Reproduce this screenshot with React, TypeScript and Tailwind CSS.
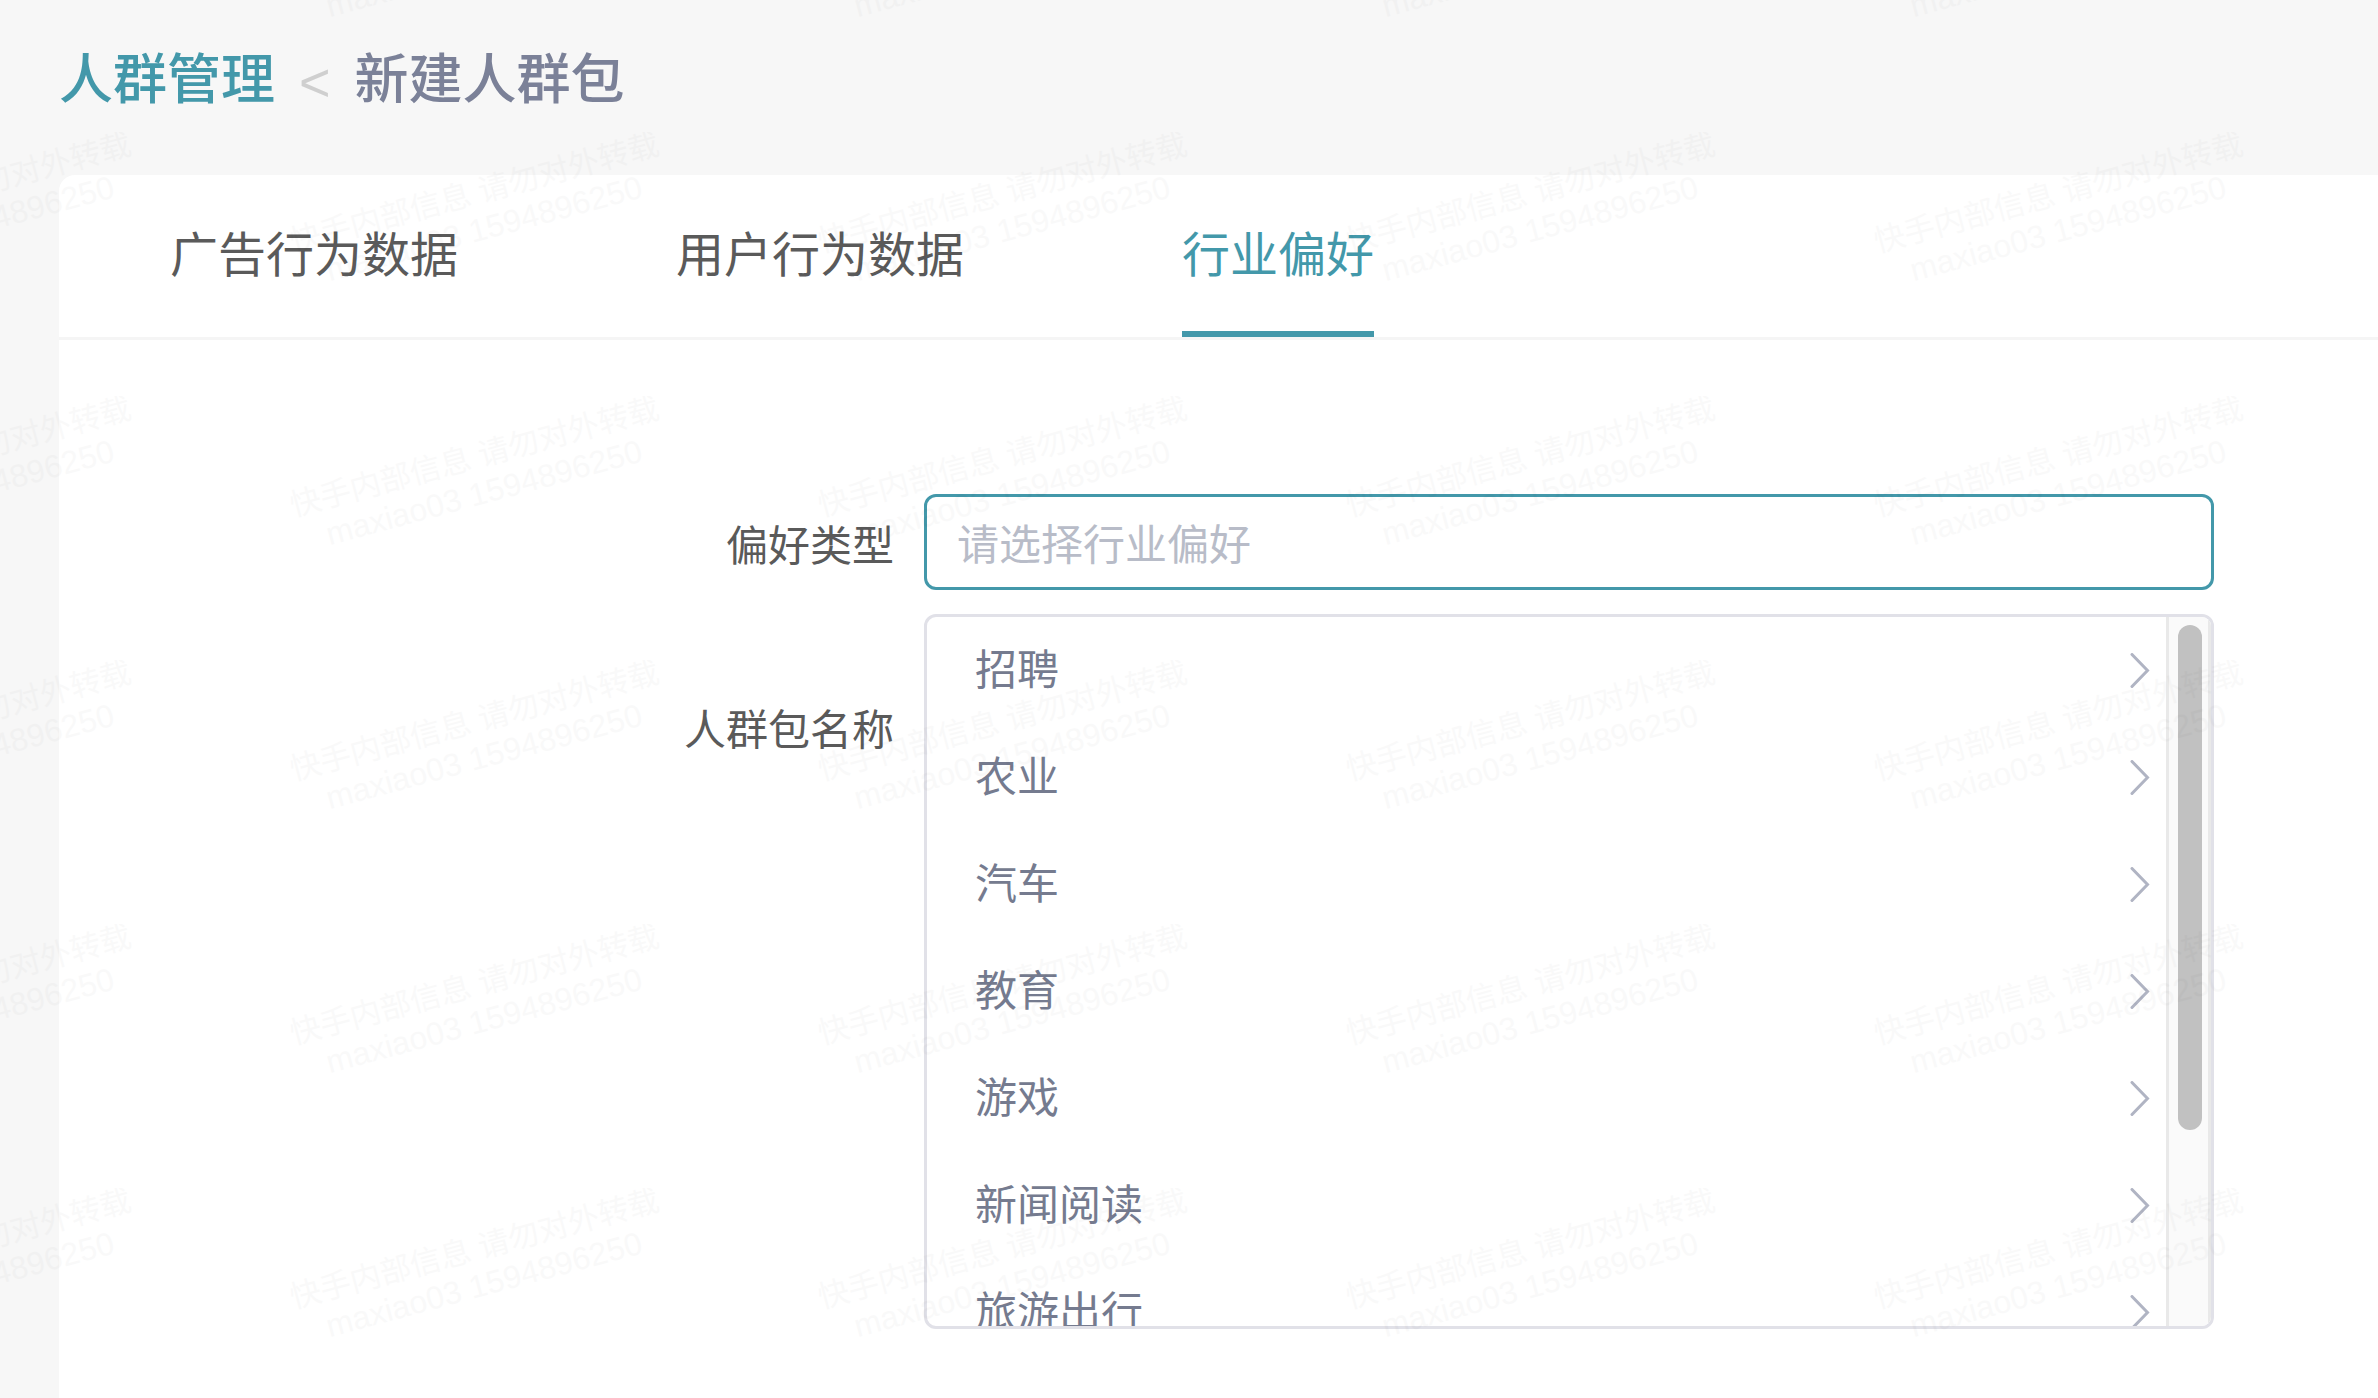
import { ChangeEvent, useState } from "react";

const TABS = ["广告行为数据", "用户行为数据", "行业偏好"];
const OPTIONS = ["招聘", "农业", "汽车", "教育", "游戏", "新闻阅读", "旅游出行"];

function Chevron() {
  return (
    <svg width="20" height="36" viewBox="0 0 20 36" fill="none" className="shrink-0" aria-hidden="true">
      <path d="M2 1.5 L17.5 17.5 L2 33.5" stroke="#b0b4c3" strokeWidth="3" strokeLinecap="round" strokeLinejoin="miter" />
    </svg>
  );
}

function Breadcrumb() {
  return (
    <nav aria-label="面包屑" className="flex items-center px-[59px] pt-10 pb-[55px] text-[54px] leading-[80px]">
      <a href="#list" className="font-medium text-[#4398aa]">人群管理</a>
      <span className="px-6 pt-1 leading-[76px] text-[#cfcfcf]" aria-hidden="true">&lt;</span>
      <span className="font-medium text-[#7b8198]">新建人群包</span>
    </nav>
  );
}

function Tabs() {
  const [active, setActive] = useState(2);
  return (
    <div role="tablist" className="flex gap-[218px] border-b-[3px] border-[#f5f5f5] pl-[111px]">
      {TABS.map((tab, i) => (
        <button
          key={tab}
          type="button"
          role="tab"
          aria-selected={i === active}
          onClick={() => setActive(i)}
          className={
            i === active
              ? "border-b-[6px] border-[#4398aa] pt-[6px] text-[48px] leading-[150px] text-[#4398aa]"
              : "border-b-[6px] border-transparent pt-[6px] text-[48px] leading-[150px] text-[#5a5a5a]"
          }
        >
          {tab}
        </button>
      ))}
    </div>
  );
}

function Dropdown({ onPick }: { onPick: (value: string) => void }) {
  return (
    <div className="absolute inset-x-0 top-full z-10 mt-6 flex h-[715px] overflow-hidden rounded-xl border-[3px] border-[#e1e1e8] bg-white">
      <ul role="listbox" aria-label="行业偏好" className="h-full flex-1 overflow-hidden">
        {OPTIONS.map((option) => (
          <li key={option} role="option" aria-selected="false">
            <button
              type="button"
              onClick={() => onPick(option)}
              className="flex h-[107px] w-full items-center justify-between pr-4 pl-12 text-[42px] text-[#757b8f]"
            >
              {option}
              <Chevron />
            </button>
          </li>
        ))}
      </ul>
      <div className="w-[45px] border-r-[3px] border-l-[3px] border-[#e9e9e9] bg-[#fafafa] pt-2 pl-[9px]">
        <div className="h-[505px] w-6 rounded-full bg-[#c1c1c1]" />
      </div>
    </div>
  );
}

function PackageForm() {
  const [kind, setKind] = useState("");
  const [name, setName] = useState("");
  return (
    <form className="flex flex-col gap-[88px] pt-[154px] pr-[164px] text-[42px]">
      <div className="flex items-center">
        <label htmlFor="kind" className="w-[865px] shrink-0 pt-2 pr-[30px] text-right text-[#5a5a5a]">
          偏好类型
        </label>
        <div className="relative min-w-0 flex-1">
          <input
            id="kind"
            value={kind}
            placeholder="请选择行业偏好"
            onChange={(e: ChangeEvent<HTMLInputElement>) => setKind(e.target.value)}
            className="block h-24 w-full rounded-xl border-[3px] border-[#4398aa] bg-white px-[30px] pt-2 text-[#757b8f] outline-none placeholder:text-[#b8bcc8]"
          />
          <Dropdown onPick={setKind} />
        </div>
      </div>
      <div className="flex items-center">
        <label htmlFor="name" className="w-[865px] shrink-0 pt-2 pr-[30px] text-right text-[#5a5a5a]">
          人群包名称
        </label>
        <input
          id="name"
          value={name}
          onChange={(e: ChangeEvent<HTMLInputElement>) => setName(e.target.value)}
          className="block h-24 min-w-0 flex-1 rounded-xl border-[3px] border-[#e1e1e8] bg-white px-[30px] text-[#757b8f] outline-none"
        />
      </div>
    </form>
  );
}

function Watermark() {
  return (
    <div className="pointer-events-none absolute inset-0 z-20 overflow-hidden opacity-[0.02] select-none" aria-hidden="true">
      <div className="-mt-[132px] -ml-[313px] grid w-[2640px] grid-cols-5 text-black">
        {Array.from({ length: 30 }, (_, i) => (
          <div key={i} className="flex h-[264px] items-start justify-center overflow-hidden pt-[42px]">
            <div className="-rotate-15 text-center whitespace-nowrap">
              <p className="text-[31px] leading-[37px]">快手内部信息 请勿对外转载</p>
              <p className="text-[32px] leading-[37px]">maxiao03 1594896250</p>
            </div>
          </div>
        ))}
      </div>
    </div>
  );
}

export default function App() {
  return (
    <div className="relative flex min-h-screen flex-col overflow-hidden bg-[#f7f7f7] font-['Liberation_Sans','Noto_Sans_CJK_SC',sans-serif]">
      <Breadcrumb />
      <main className="ml-[59px] flex-1 rounded-tl-2xl bg-white">
        <Tabs />
        <PackageForm />
      </main>
      <Watermark />
    </div>
  );
}
